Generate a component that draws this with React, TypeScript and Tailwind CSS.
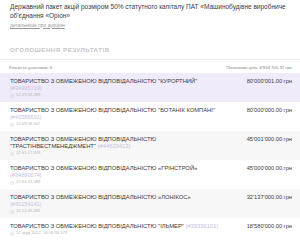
import { Clock } from "lucide-react";

type Bid = {
  name: string;
  code: string;
  time: string;
  price: string;
  tone: "active" | "gray" | "white";
  codeInline?: boolean;
};

const bids: Bid[] = [
  {
    name: "ТОВАРИСТВО З ОБМЕЖЕНОЮ ВІДПОВІДАЛЬНІСТЮ \"КУРОРТНИЙ\"",
    code: "(#34995719)",
    time: "12:49:58.289",
    price: "80'000'001.00 грн",
    tone: "active",
  },
  {
    name: "ТОВАРИСТВО З ОБМЕЖЕНОЮ ВІДПОВІДАЛЬНІСТЮ \"БОТАНІК КОМПАНІ\"",
    code: "(#43586591)",
    time: "12:49:58.347",
    price: "80'000'000.00 грн",
    tone: "white",
  },
  {
    name: "ТОВАРИСТВО З ОБМЕЖЕНОЮ ВІДПОВІДАЛЬНІСТЮ \"ТРАСТІНВЕСТМЕНЕДЖМЕНТ\"",
    code: "(#44623413)",
    time: "12:41:17.976",
    price: "45'001'000.00 грн",
    tone: "gray",
    codeInline: true,
  },
  {
    name: "ТОВАРИСТВО З ОБМЕЖЕНОЮ ВІДПОВІДАЛЬНІСТЮ «ГРІНСТРОЙ»",
    code: "(#34890074)",
    time: "12:34:21.084",
    price: "45'000'000.00 грн",
    tone: "white",
  },
  {
    name: "ТОВАРИСТВО З ОБМЕЖЕНОЮ ВІДПОВІДАЛЬНІСТЮ «ЛОНІКОС»",
    code: "(#40154141)",
    time: "12:14:45.681",
    price: "32'137'000.00 грн",
    tone: "gray",
  },
  {
    name: "ТОВАРИСТВО З ОБМЕЖЕНОЮ ВІДПОВІДАЛЬНІСТЮ \"ІЛЬМЕР\"",
    code: "(#39336101)",
    time: "22 груд 2022, 16:16:33.373",
    price: "18'580'000.00 грн",
    tone: "white",
    codeInline: true,
  },
];

function BidRow({ bid }: { bid: Bid }) {
  const bg =
    bid.tone === "active"
      ? "bg-[#efebfa]"
      : bid.tone === "gray"
        ? "bg-[#f7f7f8]"
        : "bg-white";
  return (
    <div className={`flex items-start justify-between pl-[10px] pr-[8px] pt-[5px] pb-[3px] ${bg}`}>
      <div className="w-[220px]">
        <div className="text-[5.8px] leading-[7px] text-[#3a3a3a]">
          {bid.name}
          {bid.codeInline && (
            <span className="text-[#c8c0dc]"> {bid.code}</span>
          )}
        </div>
        {!bid.codeInline && (
          <div className="text-[5.6px] leading-[7px] text-[#c8c0dc]">{bid.code}</div>
        )}
        <div className="flex h-[7px] items-center gap-[2px] text-[4.2px] text-[#b5b5b5]">
          <Clock className="h-[4px] w-[4px]" strokeWidth={1.5} />
          {bid.time}
        </div>
      </div>
      <div className="text-[5.7px] leading-[7px] text-[#3a3a3a]">{bid.price}</div>
    </div>
  );
}

export default function App() {
  return (
    <div
      className="h-[245px] w-[300px] overflow-hidden bg-white"
      style={{ fontFamily: "'Liberation Sans', Arial, sans-serif" }}
    >
      <div className="px-[10px] pt-[2px]">
        <div className="text-[6.5px] leading-[9px] text-[#3c3c3c]">
          Державний пакет акцій розміром 50% статутного капіталу ПАТ «Машинобудівне виробниче
          об'єднання «Оріон»
        </div>
        <div className="mt-[1.5px] text-[5px] leading-[7px] text-[#9a9a9a] underline">
          детальніше про аукціон
        </div>
        <div className="mt-[17.5px] pb-[5px] text-[6.2px] leading-[8px] font-bold tracking-[0.5px] text-[#c6c6c6]">
          ОГОЛОШЕННЯ РЕЗУЛЬТАТІВ
        </div>
      </div>
      <div className="border-t border-[#eeeeee]">
        <div className="flex items-center justify-between pl-[9px] pr-[8px] pt-[5px] pb-[2px] text-[4.4px] leading-[6px] text-[#858585]">
          <span>Кількість учасників: 6</span>
          <span>Початкова ціна: 6'854'705.37 грн</span>
        </div>
        {bids.map((b) => (
          <BidRow key={b.code} bid={b} />
        ))}
      </div>
    </div>
  );
}
